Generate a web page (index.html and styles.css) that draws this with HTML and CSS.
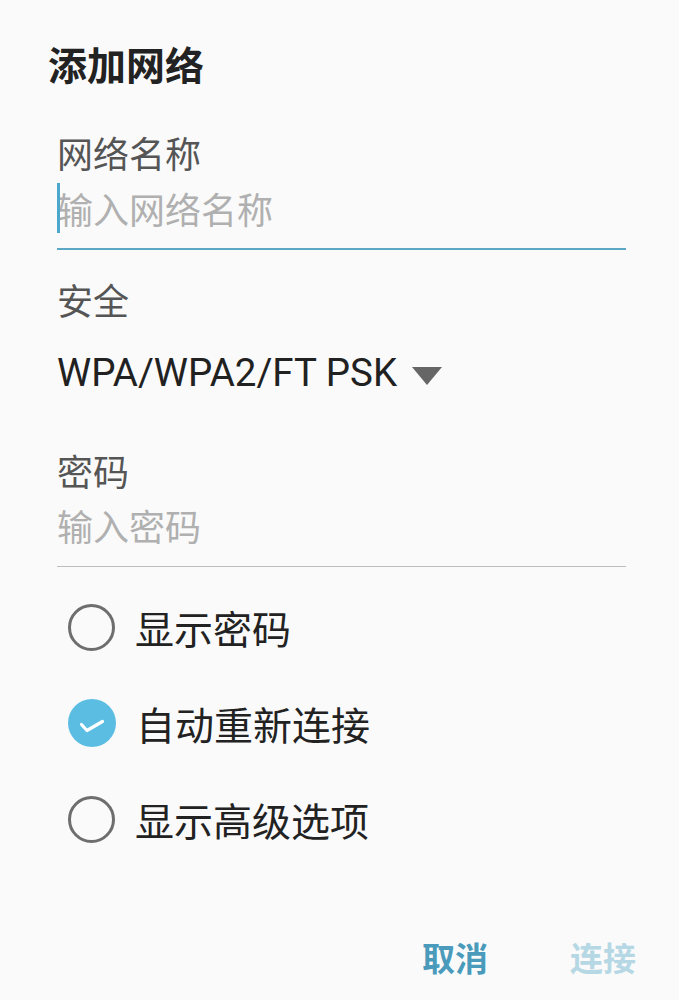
FILE: index.html
```html
<!DOCTYPE html>
<html lang="zh-CN">
<head>
<meta charset="utf-8">
<title>添加网络</title>
<link rel="stylesheet" href="styles.css">
</head>
<body>
<div class="dialog">
  <h1 class="title">添加网络</h1>
  <div class="fields">
    <div class="label label-first">网络名称</div>
    <div class="input input-focused"><span class="cursor"></span><span class="placeholder">输入网络名称</span></div>
    <div class="label label-security">安全</div>
    <div class="spinner"><span class="spinner-text">WPA/WPA2/FT PSK</span><span class="caret"></span></div>
    <div class="label label-password">密码</div>
    <div class="input input-plain"><span class="placeholder">输入密码</span></div>
  </div>
  <div class="options">
    <div class="option"><span class="radio"></span><span class="option-text">显示密码</span></div>
    <div class="option"><span class="radio radio-checked"><svg viewBox="0 0 48 48" width="48" height="48"><path d="M13.5 25.5 L19 31.5 L34.5 22.5" fill="none" stroke="#fff" stroke-width="3.2" stroke-linecap="round" stroke-linejoin="round"/></svg></span><span class="option-text">自动重新连接</span></div>
    <div class="option"><span class="radio"></span><span class="option-text">显示高级选项</span></div>
  </div>
  <div class="actions">
    <span class="btn btn-cancel">取消</span>
    <span class="btn btn-connect">连接</span>
  </div>
</div>
</body>
</html>
```
FILE: styles.css
```css
html, body {
  margin: 0;
  padding: 0;
  background: #fafafa;
}
body {
  font-family: "Noto Sans CJK SC", "Noto Sans", sans-serif;
  width: 679px;
  height: 1000px;
  overflow: hidden;
}
.dialog {
  display: flex;
  flex-direction: column;
}
.title {
  margin: 38px 0 0 48px;
  font-size: 39px;
  line-height: 50px;
  font-weight: 700;
  color: #222;
}
.fields {
  padding: 0 53px 0 57px;
  display: flex;
  flex-direction: column;
}
.label {
  font-size: 36px;
  line-height: 50px;
  color: #555;
}
.label-first { margin-top: 39px; }
.label-security { margin-top: 24px; }
.label-password { margin-top: 47px; }
.input {
  position: relative;
  height: 50px;
  padding-bottom: 15px;
  font-size: 36px;
  line-height: 50px;
  display: flex;
  align-items: center;
}
.input-focused {
  margin-top: 6px;
  border-bottom: 2px solid #5aa7c6;
}
.input-plain {
  margin-top: 5px;
  padding-bottom: 16px;
  border-bottom: 1.5px solid #bdbdbd;
}
.cursor {
  position: absolute;
  left: 0;
  top: 0;
  width: 3px;
  height: 50px;
  background: #4ba8cc;
}
.placeholder {
  color: #b0b0b0;
}
.spinner {
  margin-top: 24px;
  height: 50px;
  display: flex;
  align-items: center;
}
.spinner-text {
  font-family: Roboto, "Noto Sans", sans-serif;
  font-size: 38.5px;
  line-height: 50px;
  color: #212121;
}
.caret {
  margin-left: 15px;
  margin-top: 5px;
  width: 0;
  height: 0;
  border-left: 15.5px solid transparent;
  border-right: 15.5px solid transparent;
  border-top: 18px solid #666;
}
.options {
  margin-top: 12px;
  display: flex;
  flex-direction: column;
}
.option {
  height: 96px;
  display: flex;
  align-items: center;
  padding-left: 68px;
}
.radio {
  box-sizing: border-box;
  width: 47px;
  height: 47px;
  border-radius: 50%;
  border: 3px solid #6e6e6e;
  flex: none;
}
.radio-checked {
  border: none;
  width: 48px;
  height: 48px;
  background: #5bbde2;
  display: flex;
}
.option-text {
  margin-left: 20px;
  font-size: 39px;
  line-height: 50px;
  color: #222;
}
.actions {
  margin-top: 65px;
  display: flex;
  justify-content: flex-end;
  gap: 82px;
  padding-right: 43px;
}
.btn {
  font-size: 33px;
  line-height: 50px;
  font-weight: 700;
}
.btn-cancel { color: #4a9bbb; }
.btn-connect { color: #b6d7e4; }
```
